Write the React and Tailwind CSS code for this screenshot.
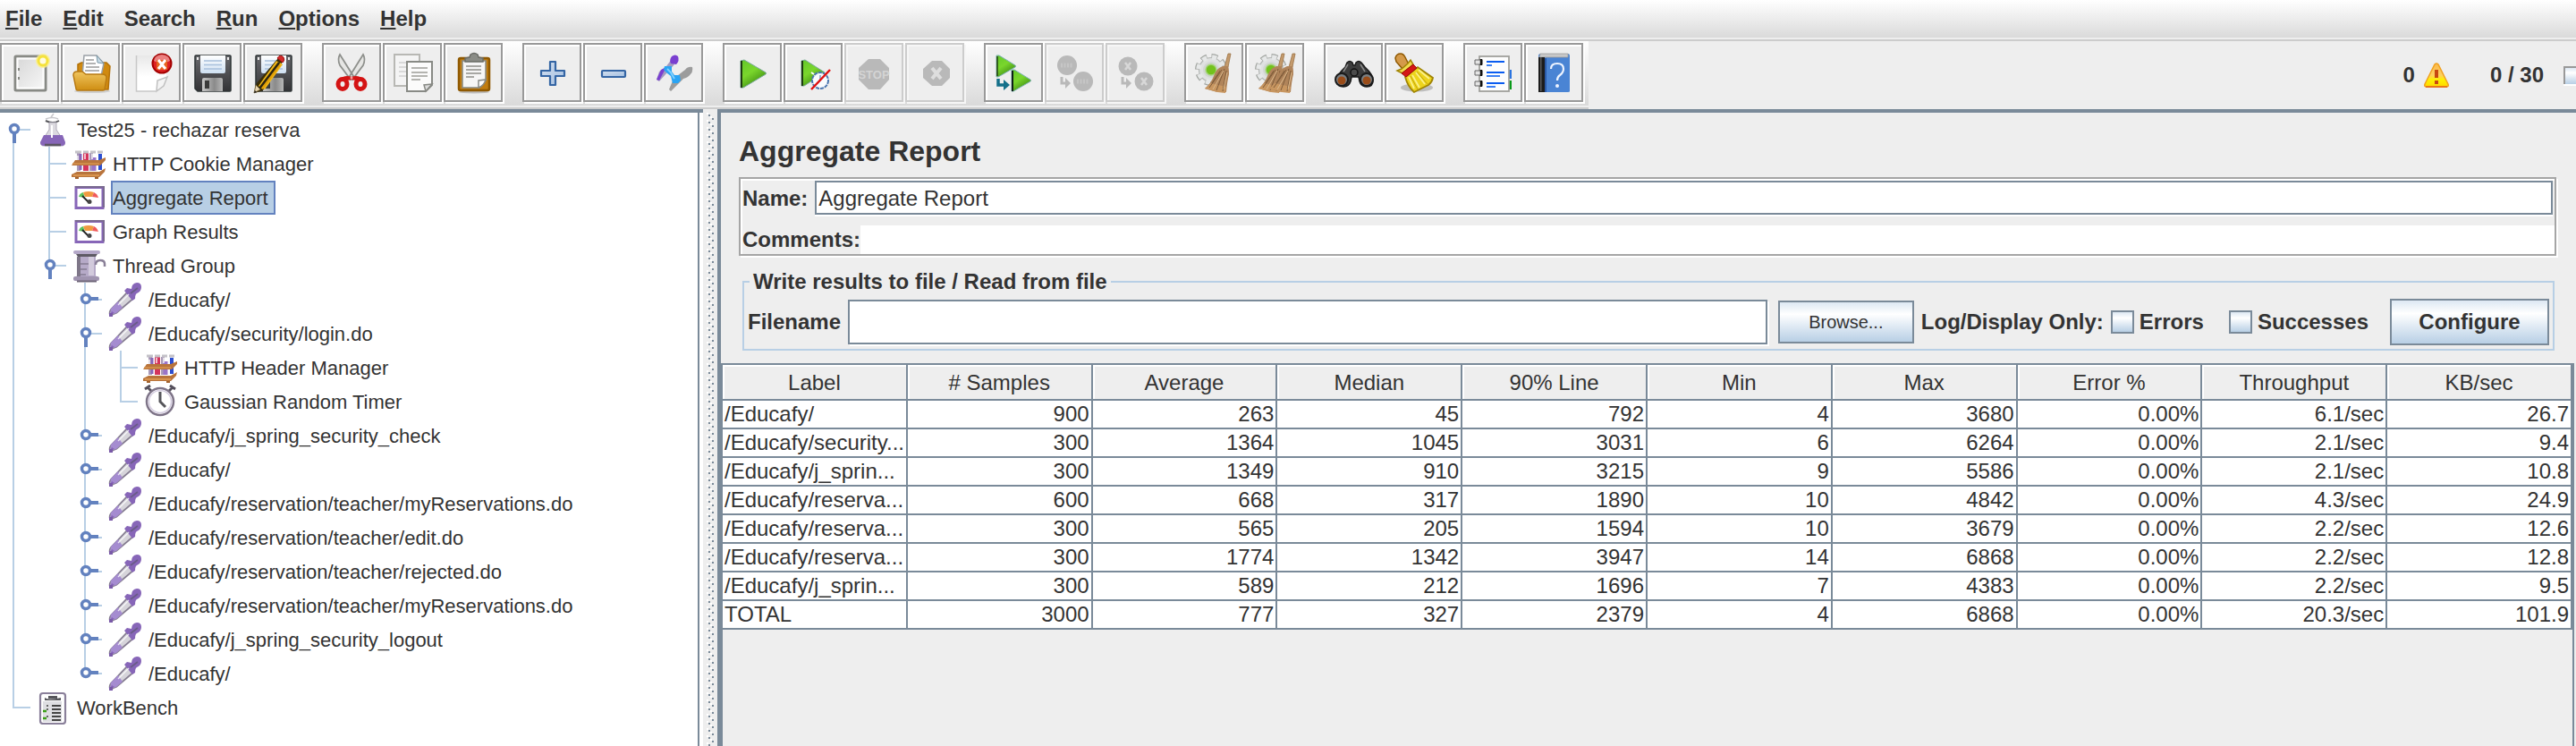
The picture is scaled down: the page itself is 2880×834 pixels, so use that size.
import React from "react";

/* ---------- toolbar icons, drawn on a 66px grid ---------- */

const NewIcon = () => (
  <>
    <rect x="17" y="15" width="34" height="38" rx="1" fill="#e4e4e4" stroke="#888a85" strokeWidth="3" />
    <rect x="19.5" y="17.5" width="29" height="33" fill="url(#paper)" stroke="#fff" strokeWidth="2" />
    <path d="M20 28h2v3h-2zM20 38h2v3h-2z" fill="#888a85" />
    <circle cx="48" cy="20" r="8" fill="#fcf08a" opacity=".8" />
    <circle cx="48" cy="20" r="5" fill="#fffbe0" stroke="#f5e23c" strokeWidth="3" />
  </>
);

const OpenIcon = () => (
  <>
    <ellipse cx="35" cy="54" rx="20" ry="2" fill="#bbb" opacity=".6" />
    <path d="M19 24l4-2h28l4 4-2 26H19z" fill="#d08a10" stroke="#b37108" strokeWidth="1.5" />
    <path d="M26 14h14l8 9-3 14H24z" fill="#fff" stroke="#9aa0a6" strokeWidth="1.5" />
    <path d="M40 14l1 8 7 1z" fill="#c9dbe6" stroke="#7d99a8" strokeWidth="1" />
    <path d="M28 19h9M28 23h11M28 27h15M27 31h16" stroke="#9a9a9a" strokeWidth="1.5" />
    <path d="M14 36q0-4 4-4h6l4 3h18q5 0 5 4l-2 13q0 1-2 1H19q-2 0-2-2z" fill="url(#folder)" stroke="#b87a12" strokeWidth="1.5" />
  </>
);

const CloseIcon = () => (
  <>
    <path d="M16 14h34v28l-12 12H16z" fill="url(#sheet)" />
    <path d="M16.500 14v40H38" fill="none" stroke="#c8c8c8" strokeWidth="1.5" />
    <path d="M51 38l-4 10-8 6 1-12z" fill="#f4f4f4" stroke="#c0c0c0" strokeWidth="1.5" />
    <circle cx="45" cy="23" r="10.500" fill="#d22" stroke="#a40000" strokeWidth="2" />
    <path d="M36 20a9 7 0 0118 0q-9 5-18 0z" fill="#f0a0a0" opacity=".75" />
    <rect x="39" y="19" width="12" height="11" fill="#e6641e" />
    <path d="M41 19l8 10M49 19l-8 10" stroke="#fff" strokeWidth="3" />
  </>
);

const Floppy = () => (
  <>
    <path d="M15 14h38q1 0 1 1v38q0 1-1 1H17l-3-3V15q0-1 1-1z" fill="url(#floppy)" stroke="#2e3436" strokeWidth="1.5" />
    <path d="M20 14h28v18q0 2-2 2H22q-2 0-2-2z" fill="url(#label)" />
    <path d="M24 20h20M24 24.500h20M24 29h20" stroke="#a8c0dc" strokeWidth="1.5" />
    <rect x="16" y="16" width="2" height="3" fill="#eee" />
    <rect x="50" y="16" width="2" height="3" fill="#eee" />
    <path d="M22 41q0-2 2-2h19q2 0 2 2v13H22z" fill="url(#metal)" />
    <rect x="25" y="42" width="5" height="9" fill="#3a3a3a" />
  </>
);

const SaveAsIcon = () => (
  <>
    <Floppy />
    <path d="M39 17l5 4-22 32-9 3 2-11z" fill="#3a2d05" />
    <path d="M37 20l3 2-20 29-3-3zM41 22l3 2-20 28-3-2z" fill="#f2b818" />
    <path d="M38 22l4 3-20 27-3-2z" fill="#e2a006" />
    <path d="M40 22l-22 29" stroke="#2b2410" strokeWidth="2.5" />
    <path d="M14 47l5 5-7 4z" fill="#e8d5b0" stroke="#7a6a40" strokeWidth="1" />
    <path d="M12 56l1-3 2 2z" fill="#222" />
    <path d="M38 17q3-5 7-1 2 3-1 6z" fill="#d22b2b" stroke="#a01010" strokeWidth="1" />
  </>
);

const CutIcon = () => (
  <>
    <path d="M20 13q-3 5 0 12l12 16 3-4zM46 13q3 5 0 12L34 41l-3-4z" fill="#e6e6e4" stroke="#8e908c" strokeWidth="1.800" />
    <ellipse cx="23" cy="46" rx="5" ry="5.500" fill="none" stroke="#d41414" strokeWidth="5" />
    <ellipse cx="43" cy="46" rx="5" ry="5.500" fill="none" stroke="#d41414" strokeWidth="5" />
    <path d="M18 41q8-6 15-3 7-3 15 3l-6 2-9-2-9 2z" fill="#d41414" />
    <circle cx="33" cy="39" r="1.500" fill="#f5a0a0" />
  </>
);

const CopyIcon = () => (
  <>
    <rect x="13" y="13" width="28" height="35" fill="#f4f4f4" stroke="#b8b8b4" strokeWidth="2" />
    <path d="M18 22h18M18 27h10M18 32h10M18 37h10" stroke="#d0d0d0" strokeWidth="1.5" />
    <path d="M27 21h28v26l-7 7H27z" fill="#fbfbfb" stroke="#888a85" strokeWidth="2" />
    <path d="M55 46l-9 1 2 7z" fill="#ddd" stroke="#888a85" strokeWidth="1.5" />
    <path d="M32 28h18M32 33h18M32 37h18M32 41h10" stroke="#b4b4b0" strokeWidth="1.800" />
  </>
);

const PasteIcon = () => (
  <>
    <ellipse cx="34" cy="55" rx="17" ry="1.500" fill="#aaa" opacity=".7" />
    <rect x="17" y="17" width="34" height="36" rx="2" fill="#c17d11" stroke="#8f5902" strokeWidth="2.500" />
    <path d="M21 20h26v22l-7 8H21z" fill="#f6f6f6" stroke="#888a85" strokeWidth="1.500" />
    <path d="M47 41l-8 1 0 8q6-2 8-9z" fill="#fff" stroke="#888a85" strokeWidth="1.500" />
    <path d="M25 26h17M25 30h17M25 34h17M25 38h9" stroke="#a8a8a4" strokeWidth="1.800" />
    <path d="M24 21v-4l5-1 1-3q4-3 8 0l1 3 5 1v4z" fill="#8a8c86" stroke="#6a6c66" strokeWidth="1.500" />
  </>
);

const PlusIcon = () => (
  <path d="M31 21h6v10h10v6H37v10h-6V37H21v-6h10z" fill="url(#blueFill)" stroke="#3465a4" strokeWidth="2.200" strokeLinejoin="round" />
);

const MinusIcon = () => (
  <rect x="21" y="31" width="26" height="7" rx="1" fill="url(#blueFill)" stroke="#3465a4" strokeWidth="2.200" />
);

const ToggleIcon = () => (
  <>
    <path d="M31 18l3 6-8 9-9 10-3-2 3-9 8-6z" fill="#a49ac0" />
    <path d="M31 15q4-3 7 0 2 5-2 9l-6-1q-2-4 1-8zM19 30l6-3-8 15-3-1z" fill="#7a3fd0" />
    <path d="M46 30q3-4 8-3 1 5-2 8-3 4-8 5L30 54l-2-2 5-12z" fill="#9c9c9c" />
    <path d="M23 26h8v6l3 4h6l1 6-3 3h-6l-2-8-4-3-4-4z" fill="#2aa4f4" />
    <path d="M26 29l4 4 4 7" fill="none" stroke="#7fd0ff" strokeWidth="2" />
  </>
);

const StartIcon = () => (
  <>
    <path d="M20 20l4-1 24 14q1 1 0 2L23 50h-3z" fill="url(#play)" stroke="#7aa89a" strokeWidth="1" />
    <path d="M21 20v30" stroke="#1e3a12" strokeWidth="2" />
  </>
);

const StartNoPauseIcon = () => (
  <>
    <path d="M20 20l4-1 22 14-23 15h-3z" fill="url(#play)" stroke="#7aa89a" strokeWidth="1" />
    <path d="M21 20v28" stroke="#1e3a12" strokeWidth="2" />
    <circle cx="41" cy="42" r="9" fill="#f8fcff" stroke="#4a76b0" strokeWidth="2" strokeDasharray="4 1" />
    <path d="M31 33l3 2M41 36v6" stroke="#fff" strokeWidth="2" />
    <path d="M41 36v6l-3 3" stroke="#7a9ac0" strokeWidth="1.500" fill="none" />
    <path d="M31 52L52 30" stroke="#e01010" strokeWidth="2.500" />
  </>
);

const StopIcon = () => (
  <>
    <path d="M27 18h13l10 10v13L40 52H27L16 41V28z" fill="#b9b9b9" />
    <text x="33" y="40" textAnchor="middle" fontSize="13" fontWeight="700" fontFamily="Liberation Sans, sans-serif" fill="#d4d4d4" textRendering="geometricPrecision">
      STOP
    </text>
  </>
);

const ShutdownIcon = () => (
  <>
    <path d="M30 20h11l9 9v10l-9 9H30l-10-9V29z" fill="#b9b9b9" />
    <path d="M30 28l10 12M40 28L30 40" stroke="#dedede" strokeWidth="4" />
  </>
);

const RemoteStartIcon = () => (
  <>
    <path d="M14 14l3 0 18 11q1 1 0 2L16 38h-2z" fill="url(#play)" stroke="#7ab0b0" strokeWidth="1" />
    <path d="M15 15v22" stroke="#1e3a12" strokeWidth="1.500" />
    <path d="M31 30l3 0 18 11q1 1 0 2L33 54h-2z" fill="url(#play)" stroke="#7ab0b0" strokeWidth="1" />
    <path d="M32 31v23" stroke="#102018" strokeWidth="2" />
    <path d="M16 40v7h9" fill="none" stroke="#14708a" strokeWidth="3.500" />
    <path d="M22 41l7 6-7 6z" fill="#14708a" />
  </>
);

const GreyArrow = () => (
  <>
    <path d="M19 38v7h6" fill="none" stroke="#b9b9b9" strokeWidth="3" />
    <path d="M23 39l6 6-6 6z" fill="#b9b9b9" />
  </>
);

const RemoteStopIcon = () => (
  <>
    <circle cx="25" cy="25" r="11" fill="#b9b9b9" />
    <circle cx="43" cy="43" r="11" fill="#b9b9b9" />
    <path d="M18 25h14M36 43h14" stroke="#c6c6c6" strokeWidth="5" strokeDasharray="2 1.500" />
    <GreyArrow />
  </>
);

const RemoteShutdownIcon = () => (
  <>
    <circle cx="25" cy="26" r="10.500" fill="#b9b9b9" />
    <circle cx="43" cy="43" r="10.500" fill="#b9b9b9" />
    <path d="M22 22l6 8M28 22l-6 8M40 39l6 8M46 39l-6 8" stroke="#d8d8d8" strokeWidth="2.500" />
    <GreyArrow />
  </>
);

const Gear = ({ cx }) => (
  <>
    <circle cx={cx} cy="30" r="14.500" fill="none" stroke="#a2a5a1" strokeWidth="7" strokeDasharray="6.400 5" />
    <circle cx={cx} cy="30" r="13.500" fill="#dfe1e1" stroke="#b4b7b5" strokeWidth="1.200" />
    <circle cx={cx} cy="30" r="14" fill="none" stroke="#e6e8e8" strokeWidth="5.500" strokeDasharray="5 6" strokeDashoffset="-.7" />
    <circle cx={cx} cy="30" r="9" fill="#d2d5d3" />
    <circle cx={cx} cy="30" r="6" fill="#73c21c" stroke="#a8d480" strokeWidth="1.500" />
  </>
);

const Straw = ({ x }) => (
  <g transform={`translate(${x} 0)`}>
    <path d="M49 12h3l-3 15h-4z" fill="#c49a6c" stroke="#9a7448" strokeWidth=".8" />
    <path d="M43 26h6q1 2 1 9-2 8-3 20l-10 0-14-4q7-6 10-14 2-8 10-11z" fill="#b0845a" />
    <path d="M23 51q4-3 6-6l18 4-1 7-9-1z" fill="#c89660" />
    <path d="M42 30L28 50M45 29l-9 24M47 31l-4 23M40 31l-9 14" stroke="#7f5c3a" strokeWidth="1" />
    <path d="M44 31L32 52M48 33l-4 19" stroke="#dcb98c" strokeWidth="1" />
  </g>
);

const ClearIcon = () => (
  <>
    <Gear cx="30" />
    <Straw x={0} />
  </>
);

const ClearAllIcon = () => (
  <>
    <Gear cx="29" />
    <Straw x={-8} />
    <Straw x={4} />
  </>
);

const SearchIcon = () => (
  <>
    <path d="M26 22q3-3 6 0l1 3h2l1-3q3-3 6 0l4 5q9 8 9 15 0 7-7 7-6 0-8-6l-1-5h-8l-1 5q-2 6-8 6-7 0-7-7 0-7 9-15z" fill="#3c3c3c" stroke="#1a1a1a" strokeWidth="1.500" />
    <circle cx="34" cy="33" r="4" fill="#4a4a4a" stroke="#111" strokeWidth="1.500" />
    <circle cx="20" cy="41" r="7" fill="#7a7f82" stroke="#1a1a1a" strokeWidth="2" />
    <circle cx="48" cy="41" r="7" fill="#7a7f82" stroke="#1a1a1a" strokeWidth="2" />
    <circle cx="20" cy="42" r="4.500" fill="#9a4c18" />
    <circle cx="48" cy="42" r="4.500" fill="#9a4c18" />
    <path d="M27 24l-5 8M41 24l5 8" stroke="#8a8a8a" strokeWidth="1.500" />
  </>
);

const ClearSearchIcon = () => (
  <>
    <ellipse cx="36" cy="50" rx="18" ry="4.500" fill="#aaa" opacity=".7" />
    <path d="M12 17q1-5 6-5 3 0 5 4l4 8-7 5-7-8z" fill="#d49a4a" stroke="#8f5902" strokeWidth="1.500" />
    <path d="M23 38l14-11 17 12q-1 5-5 8l-16 8q-7-6-10-17z" fill="#edd41c" stroke="#a08404" strokeWidth="1.800" />
    <path d="M27 38l6 13M31 36l8 14M35 33l10 13M38 30l12 10" stroke="#fbf08a" strokeWidth="1.800" />
    <path d="M29 37l8 15M36 32l12 14" stroke="#c4a60c" strokeWidth="1" />
    <path d="M14 31l5-2 7-6 3-4 3 5-12 10z" fill="#f0dc50" stroke="#a08404" strokeWidth="1.500" />
    <path d="M19 34l13-10 4 4-12 10z" fill="#d41818" stroke="#a00808" strokeWidth="1" />
  </>
);

const FunctionHelperIcon = () => (
  <>
    <rect x="47" y="30" width="7" height="10" fill="#2b74e0" />
    <rect x="47" y="42" width="7" height="10" fill="#0a9a1a" />
    <rect x="18" y="15" width="33" height="39" fill="#fdfdfd" stroke="#a0a09c" strokeWidth="1.800" />
    <path d="M26 21h20M26 33h20M26 45h20" stroke="#0a5cf0" strokeWidth="2.200" />
    <path d="M26 25h6M26 37h15M26 49h10" stroke="#3c80f4" strokeWidth="1.800" />
    <path d="M13 19h8v5h-8zM13 31h8v5h-8zM13 43h8v5h-8z" fill="#e4e4e4" stroke="#666" strokeWidth="1" />
    <path d="M20 18v7M20 30v7M20 42v7" stroke="#111" strokeWidth="2.500" />
  </>
);

const HelpIcon = () => (
  <>
    <path d="M18 12h31q2 0 2 3v39q0 1-2 1H18q-2 0-2-3V15q0-3 2-3z" fill="#4a84d4" />
    <path d="M18 12h31v4H17z" fill="#c8c8c8" stroke="#999" strokeWidth=".8" />
    <rect x="16" y="16" width="7" height="39" fill="#1c1c1c" />
    <rect x="18" y="16" width="1.500" height="38" fill="#5a5a5a" />
    <rect x="23" y="17" width="2" height="38" fill="#2a5aa8" />
    <path d="M30 29q0-6 7-6t7 6q0 4-4 7-3 2-3 6" fill="none" stroke="#eef4ff" strokeWidth="2.200" />
    <circle cx="37" cy="48" r="2" fill="#eef4ff" />
  </>
);

const GROUPS = [
  [["New", NewIcon], ["Open", OpenIcon], ["Close", CloseIcon], ["Save", Floppy], ["Save as", SaveAsIcon]],
  [["Cut", CutIcon], ["Copy", CopyIcon], ["Paste", PasteIcon]],
  [["Expand all", PlusIcon], ["Collapse all", MinusIcon], ["Toggle", ToggleIcon]],
  [["Start", StartIcon], ["Start no pauses", StartNoPauseIcon], ["Stop", StopIcon, true], ["Shutdown", ShutdownIcon, true]],
  [["Remote start all", RemoteStartIcon], ["Remote stop all", RemoteStopIcon, true], ["Remote shutdown all", RemoteShutdownIcon, true]],
  [["Clear", ClearIcon], ["Clear all", ClearAllIcon]],
  [["Find", SearchIcon], ["Reset search", ClearSearchIcon]],
  [["Function helper", FunctionHelperIcon], ["Help contents", HelpIcon]],
];

const Gradients = () => (
  <svg width="0" height="0" className="absolute" aria-hidden="true">
    <defs>
      <linearGradient id="paper" x1="0" y1="0" x2="1" y2="1">
        <stop offset="0" stopColor="#d8d8d8" />
        <stop offset="1" stopColor="#f6f6f6" />
      </linearGradient>
      <linearGradient id="sheet" x1="0" y1="0" x2="0" y2="1">
        <stop offset="0" stopColor="#e8e8e8" />
        <stop offset=".6" stopColor="#fff" />
      </linearGradient>
      <linearGradient id="folder" x1="0" y1="0" x2="0" y2="1">
        <stop offset="0" stopColor="#efc45e" />
        <stop offset="1" stopColor="#cf8e12" />
      </linearGradient>
      <linearGradient id="floppy" x1="0" y1="0" x2="0" y2="1">
        <stop offset="0" stopColor="#6a6a6e" />
        <stop offset="1" stopColor="#333336" />
      </linearGradient>
      <linearGradient id="label" x1="0" y1="0" x2="0" y2="1">
        <stop offset="0" stopColor="#fff" />
        <stop offset="1" stopColor="#cfe0f2" />
      </linearGradient>
      <linearGradient id="metal" x1="0" y1="0" x2="1" y2="0">
        <stop offset="0" stopColor="#c8c8c8" />
        <stop offset=".6" stopColor="#8a8a8a" />
        <stop offset="1" stopColor="#b8b8b8" />
      </linearGradient>
      <linearGradient id="blueFill" x1="0" y1="0" x2="1" y2="1">
        <stop offset="0" stopColor="#d4e0f0" />
        <stop offset="1" stopColor="#a4bfe0" />
      </linearGradient>
      <linearGradient id="play" x1="0" y1="0" x2=".6" y2="1">
        <stop offset="0" stopColor="#62c82a" />
        <stop offset=".5" stopColor="#7ad62c" />
        <stop offset="1" stopColor="#3c8a10" />
      </linearGradient>
      <linearGradient id="warn" x1="0" y1="0" x2="0" y2="1">
        <stop offset="0" stopColor="#fbb84a" />
        <stop offset=".5" stopColor="#fdd060" />
        <stop offset=".7" stopColor="#fff000" />
        <stop offset="1" stopColor="#ffd800" />
      </linearGradient>
    </defs>
  </svg>
);

function ToolButton({ name, Icon, disabled }) {
  const tone = disabled
    ? "border-[#cccccc] shadow-[2px_2px_0_#f6f6f6,inset_2px_2px_0_#f6f6f6]"
    : "border-[#999999] shadow-[2px_2px_0_#ffffff,inset_2px_2px_0_#ffffff]";
  return (
    <button type="button" aria-label={name} disabled={disabled} className={`size-[66px] shrink-0 border-2 bg-[#eeeeee] ${tone}`}>
      <svg viewBox="2 2 62 62" className="block size-full" aria-hidden="true">
        <Icon />
      </svg>
    </button>
  );
}

/* ---------- tree icons, drawn on a 44x38 grid ---------- */

const FlaskIcon = () => (
  <>
    <path d="M20 1l-3 4M11 7q8-3 14 0" stroke="#c8c8cc" strokeWidth="1.500" fill="none" />
    <path d="M11 9q8 4 15 0" stroke="#55555a" strokeWidth="2" fill="none" />
    <path d="M15 11h8v8l9 14q1 4-3 4H9q-4 0-3-4l9-14z" fill="#dcdae0" stroke="#b0acb8" strokeWidth="1" />
    <path d="M9 25h21l3 8q0 4-4 4H9q-4 0-4-4z" fill="#8766b8" />
    <path d="M10 36h18" stroke="#5a5560" strokeWidth="2.500" />
    <path d="M18 14v14" stroke="#fff" strokeWidth="2" />
  </>
);

const RackIcon = () => (
  <>
    <path d="M8 7v20M22 7v20" stroke="#a99ab8" strokeWidth="4" />
    <path d="M10 8v18" stroke="#8766b8" strokeWidth="3" />
    <path d="M16 7v20" stroke="#d4345c" strokeWidth="6" />
    <path d="M25 12v15" stroke="#9a74c8" strokeWidth="5" />
    <path d="M32 8v18" stroke="#2c4ed0" strokeWidth="4" />
    <path d="M4 6h7M13 6h6M21 6h6M29 6h6" stroke="#c4c2c8" strokeWidth="3" />
    <path d="M7 10v5M15 8v6M23 8v6M29 10v5" stroke="#fff" strokeWidth="1.500" opacity=".9" />
    <path d="M4 15h27l7-3v3l-6 6H0z" fill="#b8743c" />
    <path d="M1 19h30" stroke="#d8944e" strokeWidth="1.500" />
    <path d="M6 28h25l7-4-1 4-6 6H0v-3z" fill="#b8743c" />
    <path d="M2 32h29" stroke="#d8944e" strokeWidth="2" />
    <path d="M4 34h4v2H4zM26 34h4v2h-4z" fill="#a0602c" />
  </>
);

const GaugeIcon = () => (
  <>
    <rect x="5" y="7.500" width="30" height="23" fill="#fff" stroke="#8766b8" strokeWidth="3" />
    <path d="M4 7h32v23" fill="none" stroke="#7a6a90" strokeWidth="2" />
    <path d="M8 18q1-4 5-5l2 6z" fill="#5cc45c" />
    <path d="M13 13q6-2 12 0l-2 5h-8z" fill="#f09a40" />
    <path d="M25 13q4 2 5 6l-7-1z" fill="#f05a5a" />
    <path d="M12 17l7 7" stroke="#222" strokeWidth="1.800" />
    <circle cx="20" cy="23.500" r="2.500" fill="#444" />
  </>
);

const SpoolIcon = () => (
  <>
    <rect x="2" y="2" width="30" height="4" rx="2" fill="#b4a8c8" />
    <path d="M5 6h24l-2 3H7z" fill="#5e5a64" />
    <path d="M6 9h21v21l3 4H4l2-4z" fill="#b6aac8" />
    <path d="M6 9h4v22H6z" fill="#7e7688" />
    <path d="M19 9h6v21h-6z" fill="#d2cadc" />
    <path d="M10 17h9M10 23h7M10 29h6" stroke="#857c92" strokeWidth="1.500" />
    <path d="M27 18q0-5 5-5 5 0 5 4v3" fill="none" stroke="#8a8098" strokeWidth="2.500" />
    <rect x="2" y="31" width="29" height="5" rx="2" fill="#a094b0" />
    <path d="M6 36.500h22" stroke="#6e6678" strokeWidth="2" />
  </>
);

const PipetteIcon = () => (
  <>
    <path d="M3 36q-1-3 1-6L23 10l7 7L10 34q-4 1-6 3z" fill="#d6d4da" stroke="#857d90" strokeWidth="1.800" />
    <path d="M4 29l8-8 5 7-7 6-7 2z" fill="#a58cd0" />
    <path d="M3 36l2-4 3 2zM19 9l3-3 5 1q0-6 6-7 5 0 5 5 0 5-5 7-2 1-2 6l-3 2-5-6z" fill="#8766b8" />
    <path d="M26 12l8-6" stroke="#6a5c88" strokeWidth="1.800" />
    <path d="M12 25l12-12" stroke="#fff" strokeWidth="1.500" opacity=".8" />
    <rect x="2" y="34" width="4" height="4" fill="#7a5aa8" />
  </>
);

const TimerIcon = () => (
  <>
    <path d="M2 5l6-4M9 7L5 3M36 5l-6-4M29 7l4-4" stroke="#55505c" strokeWidth="3" />
    <circle cx="19" cy="19" r="15" fill="#fff" stroke="#7e7488" strokeWidth="2.500" />
    <circle cx="19" cy="19" r="12.500" fill="none" stroke="#d4cce0" strokeWidth="1.500" />
    <path d="M19 8v11l6 6" fill="none" stroke="#55555a" strokeWidth="3" />
  </>
);

const ClipboardIcon = () => (
  <>
    <rect x="5" y="3" width="28" height="34" rx="3" fill="#fff" stroke="#8a809a" strokeWidth="2.200" />
    <rect x="8" y="12" width="21" height="23" fill="#dedee2" />
    <path d="M10 8q4 3 18 0v3H10zM14 6h10v3H14z" fill="#55555a" />
    <path d="M18 17h10M18 21h10M18 25h10M18 29h10M18 33h10" stroke="#444" strokeWidth="2" />
    <path d="M12 17h2M12 21h2M12 29h2" stroke="#666" strokeWidth="2" />
    <path d="M8 23h4M8 31h4" stroke="#3ca018" strokeWidth="2.500" />
  </>
);

/* Guides, one letter per 40px column:
   "|" line passes through, " " empty, "t" branch, "l" last branch,
   "r" open root, "o" open node, "e" open last node, "c" closed node, "x" closed last node */
const TREE = [
  ["r", FlaskIcon, "Test25 - rechazar reserva"],
  ["|t", RackIcon, "HTTP Cookie Manager"],
  ["|t", GaugeIcon, "Aggregate Report"],
  ["|t", GaugeIcon, "Graph Results"],
  ["|e", SpoolIcon, "Thread Group"],
  ["| c", PipetteIcon, "/Educafy/"],
  ["| o", PipetteIcon, "/Educafy/security/login.do"],
  ["| |t", RackIcon, "HTTP Header Manager"],
  ["| |l", TimerIcon, "Gaussian Random Timer"],
  ["| c", PipetteIcon, "/Educafy/j_spring_security_check"],
  ["| c", PipetteIcon, "/Educafy/"],
  ["| c", PipetteIcon, "/Educafy/reservation/teacher/myReservations.do"],
  ["| c", PipetteIcon, "/Educafy/reservation/teacher/edit.do"],
  ["| c", PipetteIcon, "/Educafy/reservation/teacher/rejected.do"],
  ["| c", PipetteIcon, "/Educafy/reservation/teacher/myReservations.do"],
  ["| c", PipetteIcon, "/Educafy/j_spring_security_logout"],
  ["| x", PipetteIcon, "/Educafy/"],
  ["l", ClipboardIcon, "WorkBench"],
];

function Guide({ kind }) {
  const top = kind === "r" ? 18 : 0;
  const bottom = "lex".includes(kind) ? 20 : 38;
  const open = "roe".includes(kind);
  const closed = "cx".includes(kind);
  return (
    <svg viewBox="0 0 40 38" className="h-[38px] w-[40px] shrink-0" shapeRendering={open || closed ? "auto" : "crispEdges"} aria-hidden="true">
      {kind !== " " && <rect x="14" y={top} width="2" height={bottom - top} fill="#b8cfe5" />}
      {kind !== " " && kind !== "|" && <rect x="14" y="18" width="20" height="2" fill="#b8cfe5" />}
      {open && <rect x="14" y="20" width="4" height="14" fill="#6382bf" />}
      {closed && <rect x="18" y="16" width="12" height="4" fill="#6382bf" />}
      {(open || closed) && <circle cx="16" cy="18" r="4.500" fill="#fff" stroke="#6382bf" strokeWidth="3.500" />}
    </svg>
  );
}

function TreePanel() {
  return (
    <ul role="tree" aria-label="Test plan" className="text-[22px] leading-[32px]">
      {TREE.map(([guides, Icon, label], i) => {
        const selected = label === "Aggregate Report";
        return (
          <li key={i} role="treeitem" aria-level={guides.length} aria-selected={selected} className="flex h-[38px] items-center whitespace-nowrap">
            {guides.split("").map((kind, n) => (
              <Guide key={n} kind={kind} />
            ))}
            <svg viewBox="0 0 44 38" className="h-[38px] w-[44px] shrink-0" aria-hidden="true">
              <Icon />
            </svg>
            <span className={selected ? "border-2 border-[#6382bf] bg-[#b8cfe5] pt-[2px] pr-[6px]" : "border-2 border-transparent pt-[2px] pr-[6px]"}>{label}</span>
          </li>
        );
      })}
    </ul>
  );
}

/* ---------- report ---------- */

const COLUMNS = ["Label", "# Samples", "Average", "Median", "90% Line", "Min", "Max", "Error %", "Throughput", "KB/sec"];
const ROWS = [
  ["/Educafy/", "900", "263", "45", "792", "4", "3680", "0.00%", "6.1/sec", "26.7"],
  ["/Educafy/security...", "300", "1364", "1045", "3031", "6", "6264", "0.00%", "2.1/sec", "9.4"],
  ["/Educafy/j_sprin...", "300", "1349", "910", "3215", "9", "5586", "0.00%", "2.1/sec", "10.8"],
  ["/Educafy/reserva...", "600", "668", "317", "1890", "10", "4842", "0.00%", "4.3/sec", "24.9"],
  ["/Educafy/reserva...", "300", "565", "205", "1594", "10", "3679", "0.00%", "2.2/sec", "12.6"],
  ["/Educafy/reserva...", "300", "1774", "1342", "3947", "14", "6868", "0.00%", "2.2/sec", "12.8"],
  ["/Educafy/j_sprin...", "300", "589", "212", "1696", "7", "4383", "0.00%", "2.2/sec", "9.5"],
  ["TOTAL", "3000", "777", "327", "2379", "4", "6868", "0.00%", "20.3/sec", "101.9"],
];

function ResultsTable() {
  return (
    <table className="w-full table-fixed border-separate border-spacing-0 text-[24px] leading-[30px]">
      <thead>
        <tr>
          {COLUMNS.map((name) => (
            <th key={name} scope="col" className="h-[40px] border-r-2 border-b-2 border-[#7a8a99] p-0 pt-[2px] font-normal shadow-[inset_2px_2px_0_#ffffff]">
              {name}
            </th>
          ))}
        </tr>
      </thead>
      <tbody>
        {ROWS.map((row, r) => (
          <tr key={r} className="bg-white">
            {row.map((cell, c) => (
              <td
                key={c}
                className={
                  c === 0
                    ? "h-[32px] overflow-hidden border-r-2 border-b-2 border-[#7a8a99] p-0 pl-[2px] text-left whitespace-nowrap"
                    : "h-[32px] border-r-2 border-b-2 border-[#7a8a99] p-0 pr-[2px] text-right whitespace-nowrap"
                }
              >
                {cell}
              </td>
            ))}
          </tr>
        ))}
      </tbody>
    </table>
  );
}

function CheckOption({ id, label }) {
  return (
    <div className="flex items-center gap-[6px]">
      <input
        id={id}
        type="checkbox"
        className="size-[26px] shrink-0 appearance-none border-2 border-[#7a8a99] bg-linear-to-b from-[#dde8f3] via-white via-30% to-[#b8cfe5]"
      />
      <label htmlFor={id}>{label}</label>
    </div>
  );
}

function ReportPanel() {
  return (
    <main className="flex min-w-0 flex-1 flex-col border-t-4 border-l-4 border-[#7a8a99]">
      <h1 className="mb-[10px] pt-6 pl-5 text-[32px] leading-[38px] font-bold">Aggregate Report</h1>

      <div className="mr-[22px] ml-5 border-2 border-[#a5a5a5] pt-[2px] pl-[2px] font-bold shadow-[2px_2px_0_#ffffff,inset_2px_2px_0_#ffffff]">
        <div className="flex items-center gap-2 pr-[2px]">
          <label htmlFor="name" className="pt-[2px]">
            Name:
          </label>
          <input
            id="name"
            type="text"
            defaultValue="Aggregate Report"
            className="h-[38px] min-w-0 flex-1 border-2 border-[#7a8a99] bg-white px-[2px] pt-[2px] text-[24px] font-normal shadow-[0_2px_0_#ffffff] outline-none"
          />
        </div>
        <div className="mt-3 flex h-[32px] items-center">
          <label htmlFor="comments">Comments:</label>
          <input id="comments" type="text" className="h-full min-w-0 flex-1 bg-white px-[2px] font-normal outline-none" />
        </div>
      </div>

      <fieldset className="mx-6 mt-[15px] min-w-0 border-2 border-[#b8cfe5] px-1 pt-[5px] pb-1 font-bold">
        <legend className="ml-[2px] px-1 leading-[28px]">Write results to file / Read from file</legend>
        <div className="flex h-[52px] items-center">
          <label htmlFor="filename">Filename</label>
          <input
            id="filename"
            type="text"
            className="ml-2 h-[50px] min-w-0 flex-1 border-2 border-[#7a8a99] bg-white px-[2px] font-normal shadow-[2px_2px_0_#ffffff] outline-none"
          />
          <button
            type="button"
            className="ml-3 h-[48px] w-[152px] border-2 border-[#7a8a99] bg-linear-to-b from-[#dde8f3] via-white via-30% to-[#b8cfe5] text-[20px] font-normal"
          >
            Browse...
          </button>
          <span className="ml-2">Log/Display Only:</span>
          <div className="ml-2 flex gap-7">
            <CheckOption id="errors" label="Errors" />
            <CheckOption id="successes" label="Successes" />
          </div>
          <button
            type="button"
            className="ml-6 h-[52px] w-[178px] border-2 border-[#7a8a99] bg-linear-to-b from-[#dde8f3] via-white via-30% to-[#b8cfe5] font-bold"
          >
            Configure
          </button>
        </div>
      </fieldset>

      <div className="mt-[14px] mr-[2px] flex-1 border-x-2 border-t-2 border-[#7a8a99]">
        <ResultsTable />
      </div>
    </main>
  );
}

const MENUS = [
  ["F", "ile"],
  ["E", "dit"],
  ["", "Search"],
  ["R", "un"],
  ["O", "ptions"],
  ["H", "elp"],
];

export default function App() {
  return (
    <div className="flex min-h-screen flex-col overflow-hidden bg-[#eeeeee] font-['Liberation_Sans',Arial,sans-serif] text-[24px] leading-[30px] text-[#333333]">
      <Gradients />

      <nav className="border-b-2 border-[#cccccc] pb-[2px]">
        <div className="flex h-[42px] items-center gap-[23px] bg-linear-to-b from-white to-[#dadada] pl-[6px] font-bold">
          {MENUS.map(([key, rest]) => (
            <button key={rest} type="button">
              {key && <span className="underline decoration-2 underline-offset-2 [text-decoration-skip-ink:none]">{key}</span>}
              {rest}
            </button>
          ))}
        </div>
      </nav>

      <header className="flex justify-between">
        <div className="border-b-2 border-[#cccccc] pb-[2px]">
          <div role="toolbar" aria-label="Main" className="flex h-[72px] gap-5 bg-linear-to-b from-white to-[#dadada] pt-[2px] pr-1">
            {GROUPS.map((group, g) => (
              <div key={g} className="flex gap-[2px] pr-[2px]">
                {group.map(([name, Icon, disabled]) => (
                  <ToolButton key={name} name={name} Icon={Icon} disabled={disabled} />
                ))}
              </div>
            ))}
          </div>
        </div>
        <div className="flex items-center font-bold">
          <span>0</span>
          <svg viewBox="0 0 28 28" className="ml-[10px] size-7" aria-hidden="true">
            <path d="M12 2q2-2 4 0l11 22q1 3-2 3H3q-3 0-2-3z" fill="url(#warn)" stroke="#f0a020" strokeWidth="1.500" />
            <path d="M2 27h24" stroke="#e87818" strokeWidth="2" />
            <path d="M12 8h4v9h-4zM12 20h4v4h-4z" fill="#c84810" />
          </svg>
          <span className="ml-[46px]">0 / 30</span>
          <span className="ml-[22px] h-[20px] w-[14px] border-t-2 border-l-2 border-[#999999] bg-linear-to-b from-[#dde8f3] via-white via-30% to-[#b8cfe5] shadow-[0_2px_0_#ffffff]" />
        </div>
      </header>

      <div className="flex flex-1">
        <aside className="w-[786px] shrink-0 border-t-4 border-[#7a8a99] bg-white pr-1">
          <div className="h-full border-r-2 border-[#7a8a99]">
            <TreePanel />
          </div>
        </aside>
        <div role="separator" aria-orientation="vertical" className="flex w-4 shrink-0 justify-center pt-1">
          <svg width="8" height="100%" className="block" shapeRendering="crispEdges" aria-hidden="true">
            <defs>
              <pattern id="bumps" width="8" height="8" patternUnits="userSpaceOnUse">
                <rect x="0" y="0" width="2" height="2" fill="#fff" />
                <rect x="2" y="2" width="2" height="2" fill="#7a8a99" />
                <rect x="4" y="4" width="2" height="2" fill="#fff" />
                <rect x="6" y="6" width="2" height="2" fill="#7a8a99" />
              </pattern>
            </defs>
            <rect width="8" height="100%" fill="url(#bumps)" />
          </svg>
        </div>
        <ReportPanel />
      </div>
    </div>
  );
}
